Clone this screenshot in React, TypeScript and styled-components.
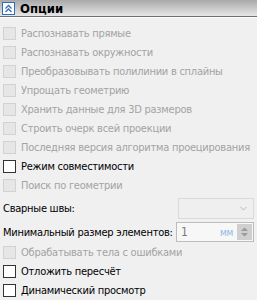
import React from "react";
import styled, { createGlobalStyle } from "styled-components";

const Global = createGlobalStyle`
  html, body { margin: 0; padding: 0; background: #f0f0f0; }
  body { font-family: Tahoma, "DejaVu Sans Condensed", "Liberation Sans", sans-serif; font-size: 11px; letter-spacing: -0.25px; }
`;

const Panel = styled.div`
  width: 257px;
  height: 300px;
  background: #f0f0f0;
  overflow: hidden;
  display: flex;
  flex-direction: column;
`;

const Header = styled.div`
  height: 18px;
  display: flex;
  align-items: center;
  gap: 5px;
  padding-left: 2px;
  background: linear-gradient(#a9a9a9, #e6e6e6);
  border-bottom: 1px solid #6e6e6e;
  box-shadow: 0 1px 0 #fbfbfb;
`;

const CollapseBox = styled.div`
  width: 11px;
  height: 11px;
  border: 1px solid #2e6fb8;
  background: #ffffff;
  display: flex;
  align-items: center;
  justify-content: center;
`;

const Title = styled.span`
  font-weight: bold;
  font-size: 13px;
  letter-spacing: 0;
  color: #000;
`;

const Body = styled.div`
  display: flex;
  flex-direction: column;
  padding: 7px 3px 0 3px;
`;

const Row = styled.label<{ $disabled?: boolean }>`
  height: 19px;
  display: flex;
  align-items: center;
  gap: 5px;
  color: ${(p) => (p.$disabled ? "#a3a3a3" : "#000")};
  white-space: nowrap;
`;

const Box = styled.span<{ $disabled?: boolean }>`
  width: 11px;
  height: 11px;
  flex: none;
  border: 1px solid ${(p) => (p.$disabled ? "#d2d2d2" : "#333333")};
  background: ${(p) => (p.$disabled ? "#e6e6e6" : "#ffffff")};
`;

const FieldRow = styled.div<{ $h: number }>`
  height: ${(p) => p.$h}px;
  display: flex;
  align-items: center;
  justify-content: space-between;
  color: #000;
  white-space: nowrap;
`;

const Combo = styled.div`
  width: 76px;
  height: 21px;
  box-sizing: border-box;
  border: 1px solid #d9d9d9;
  background: #efefef;
  display: flex;
  align-items: center;
  justify-content: flex-end;
  padding-right: 6px;
`;

const Spin = styled.div`
  width: 78px;
  height: 20px;
  box-sizing: border-box;
  border: 1px solid #bcbcbc;
  background: #f7f7f7;
  display: flex;
  align-items: center;
`;

const SpinValue = styled.span`
  flex: 1;
  padding-left: 4px;
  color: #7a7a7a;
  font-size: 12px;
`;

const Unit = styled.span`
  color: #8fb8e6;
  font-size: 10px;
  padding-right: 4px;
`;

const SpinButtons = styled.div`
  width: 15px;
  height: 16px;
  margin-right: 1px;
  background: #cfcfcf;
  display: flex;
  flex-direction: column;
  align-items: center;
  justify-content: space-evenly;
`;

const Check = ({ label, disabled }: { label: string; disabled?: boolean }) => (
  <Row $disabled={disabled}>
    <Box $disabled={disabled} />
    {label}
  </Row>
);

export default function App() {
  return (
    <Panel>
      <Global />
      <Header>
        <CollapseBox>
          <svg width="9" height="9" viewBox="0 0 9 9">
            <path d="M1.5 4.5 L4.5 1.5 L7.5 4.5 M1.5 8 L4.5 5 L7.5 8" fill="none" stroke="#2e6fb8" strokeWidth="1.3" />
          </svg>
        </CollapseBox>
        <Title>Опции</Title>
      </Header>
      <Body>
        <Check disabled label="Распознавать прямые" />
        <Check disabled label="Распознавать окружности" />
        <Check disabled label="Преобразовывать полилинии в сплайны" />
        <Check disabled label="Упрощать геометрию" />
        <Check disabled label="Хранить данные для 3D размеров" />
        <Check disabled label="Строить очерк всей проекции" />
        <Check disabled label="Последняя версия алгоритма проецирования" />
        <Check label="Режим совместимости" />
        <Check disabled label="Поиск по геометрии" />
        <FieldRow $h={26}>
          Сварные швы:
          <Combo>
            <svg width="7" height="5" viewBox="0 0 7 5">
              <path d="M0.5 1 L3.5 4 L6.5 1" fill="none" stroke="#b5b5b5" strokeWidth="1" />
            </svg>
          </Combo>
        </FieldRow>
        <FieldRow $h={22}>
          Минимальный размер элементов:
          <Spin>
            <SpinValue>1</SpinValue>
            <Unit>мм</Unit>
            <SpinButtons>
              <svg width="7" height="4" viewBox="0 0 7 4"><path d="M0 4 L3.5 0.5 L7 4Z" fill="#9a9a9a" /></svg>
              <svg width="7" height="4" viewBox="0 0 7 4"><path d="M0 0 L3.5 3.5 L7 0Z" fill="#9a9a9a" /></svg>
            </SpinButtons>
          </Spin>
        </FieldRow>
        <Check disabled label="Обрабатывать тела с ошибками" />
        <Check label="Отложить пересчёт" />
        <Check label="Динамический просмотр" />
      </Body>
    </Panel>
  );
}
